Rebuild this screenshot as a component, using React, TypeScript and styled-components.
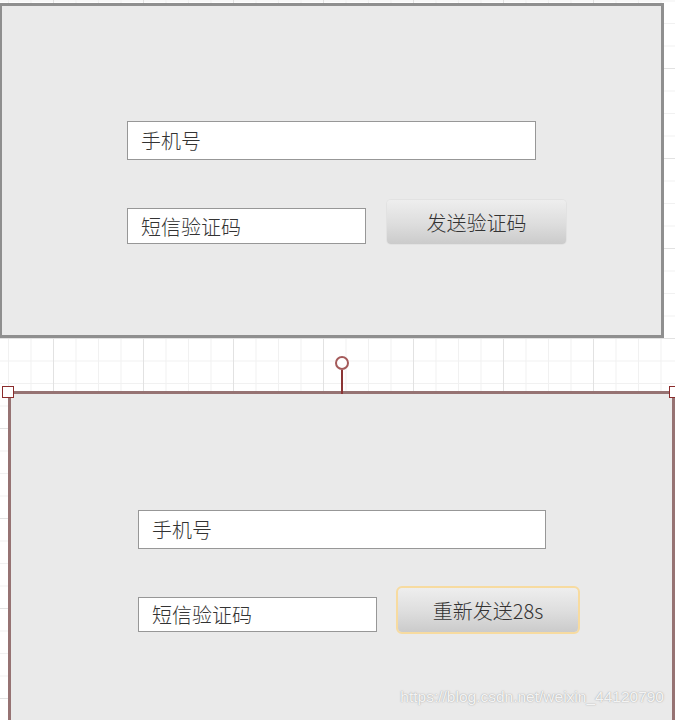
import React from "react";
import styled, { createGlobalStyle } from "styled-components";

const GlobalStyle = createGlobalStyle`
  html, body {
    margin: 0;
    padding: 0;
    width: 675px;
    height: 720px;
    overflow: hidden;
  }
  body {
    font-family: "Noto Sans CJK SC", "Noto Sans", sans-serif;
    background-color: #ffffff;
    background-image:
      linear-gradient(to right, #e2e2e2 1px, transparent 1px),
      linear-gradient(to bottom, #e2e2e2 1px, transparent 1px),
      linear-gradient(to right, #f1f1f1 1px, transparent 1px),
      linear-gradient(to bottom, #f1f1f1 1px, transparent 1px);
    background-size: 90px 90px, 90px 90px, 22.5px 22.5px, 22.5px 22.5px;
    background-position: 53px 0, 0 68px, 8px 0, 0 0.5px;
  }
`;

const Canvas = styled.div`
  display: flex;
  flex-direction: column;
  padding-top: 3px;
`;

const Panel = styled.section<{ $selected?: boolean }>`
  position: relative;
  box-sizing: border-box;
  background: #eaeaea;
  border: 3px solid ${(p) => (p.$selected ? "#967373" : "#8f8f8f")};
  margin-left: ${(p) => (p.$selected ? "8px" : "-1px")};
  margin-top: ${(p) => (p.$selected ? "53px" : "0")};
  width: ${(p) => (p.$selected ? "667px" : "665px")};
  height: ${(p) => (p.$selected ? "340px" : "335px")};
  padding: ${(p) => (p.$selected ? "116px 0 0 127px" : "115px 0 0 125px")};
  flex-shrink: 0;
`;

const Form = styled.div<{ $gap: number }>`
  display: flex;
  flex-direction: column;
  gap: ${(p) => p.$gap}px;
`;

const Row = styled.div<{ $gap: number }>`
  display: flex;
  align-items: flex-end;
  gap: ${(p) => p.$gap}px;
`;

const Field = styled.input<{ $w: number; $h: number }>`
  box-sizing: border-box;
  width: ${(p) => p.$w}px;
  height: ${(p) => p.$h}px;
  margin: 0;
  padding: 0 0 0 13px;
  border: 1px solid #979797;
  background: #ffffff;
  font-family: "Noto Sans CJK SC", "Noto Sans", sans-serif;
  font-weight: 300;
  font-size: 20px;
  color: #333333;
  outline: none;
  &::placeholder {
    color: #333333;
    opacity: 1;
  }
`;

const SendButton = styled.button<{ $active?: boolean }>`
  box-sizing: border-box;
  width: ${(p) => (p.$active ? "180px" : "179px")};
  height: 44px;
  margin: 0;
  padding: 0;
  border: none;
  border-radius: 4px;
  background: linear-gradient(to bottom, #eeeeee 0%, #dddddd 55%, #cbcbcb 100%);
  box-shadow: 0 0 0 1px rgba(0, 0, 0, 0.03);
  font-family: "Noto Sans CJK SC", "Noto Sans", sans-serif;
  font-weight: 300;
  font-size: 20px;
  color: #333333;
  outline: ${(p) => (p.$active ? "2px solid #f7dba0" : "none")};
  outline-offset: 0;
  cursor: pointer;
`;

const Handle = styled.div<{ $side: "left" | "right" }>`
  position: absolute;
  top: -8px;
  ${(p) => (p.$side === "left" ? "left: -9px;" : "right: -9px;")}
  width: 12px;
  height: 12px;
  box-sizing: border-box;
  background: #ffffff;
  border: 1.5px solid #8b2c2c;
`;

const RotateHandle = styled.div`
  position: absolute;
  top: -38px;
  left: 324px;
  width: 14px;
  height: 38px;
  display: flex;
  flex-direction: column;
  align-items: center;
`;

const RotateKnob = styled.div`
  width: 14px;
  height: 14px;
  box-sizing: border-box;
  border-radius: 50%;
  border: 2px solid #a45a5a;
  background: #ffffff;
`;

const RotateStem = styled.div`
  width: 2px;
  flex: 1;
  background: #8b3535;
`;

const Watermark = styled.div`
  position: absolute;
  top: 294px;
  right: 8px;
  font-family: "Liberation Sans", Arial, sans-serif;
  font-size: 15.5px;
  color: rgba(255, 255, 255, 0.9);
  text-shadow: 0 0 1px rgba(110, 110, 110, 0.55), 0 0 2px rgba(140, 140, 140, 0.35);
  white-space: nowrap;
`;

export default function App() {
  return (
    <>
      <GlobalStyle />
      <Canvas>
        <Panel>
          <Form $gap={40}>
            <Field $w={409} $h={39} placeholder="手机号" readOnly />
            <Row $gap={21}>
              <Field $w={239} $h={36} placeholder="短信验证码" readOnly />
              <SendButton>发送验证码</SendButton>
            </Row>
          </Form>
        </Panel>
        <Panel $selected>
          <Handle $side="left" />
          <Handle $side="right" />
          <RotateHandle>
            <RotateKnob />
            <RotateStem />
          </RotateHandle>
          <Form $gap={39}>
            <Field $w={408} $h={39} placeholder="手机号" readOnly />
            <Row $gap={21}>
              <Field $w={239} $h={35} placeholder="短信验证码" readOnly />
              <SendButton $active>重新发送28s</SendButton>
            </Row>
          </Form>
          <Watermark>https://blog.csdn.net/weixin_44120790</Watermark>
        </Panel>
      </Canvas>
    </>
  );
}
